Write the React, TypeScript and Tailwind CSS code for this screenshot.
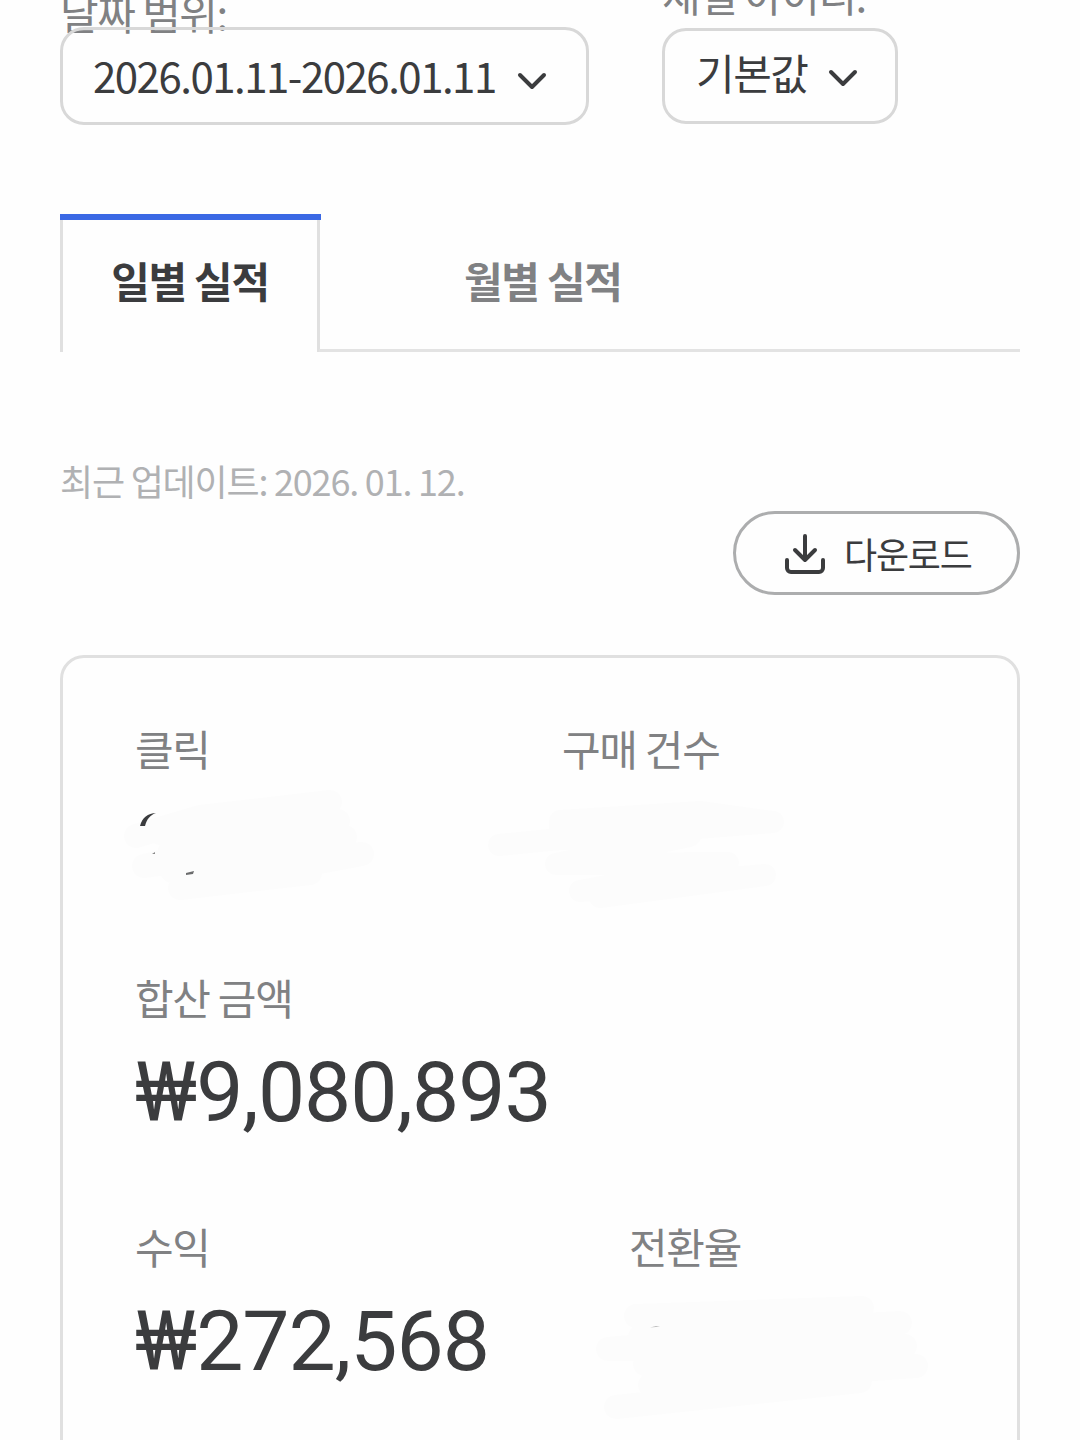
import type { ReactNode } from "react";

const tabs = [
  { id: "daily", label: "일별 실적" },
  { id: "monthly", label: "월별 실적" },
];

function Chevron() {
  return (
    <svg className="h-[18px] w-[30px] shrink-0" viewBox="0 0 30 18" fill="none" aria-hidden>
      <path d="M3 3 15 15 27 3" stroke="#3b3c3e" strokeWidth="4" strokeLinecap="round" strokeLinejoin="round" />
    </svg>
  );
}

function DownloadIcon() {
  return (
    <svg className="h-[42px] w-[42px] shrink-0" viewBox="0 0 42 42" fill="none" aria-hidden>
      <g stroke="#3b3c3e" strokeWidth="4" strokeLinecap="round" strokeLinejoin="round">
        <path d="M21 4v24M11 18 21 28l10-10" />
        <path d="M3 28v8a4 4 0 0 0 4 4h28a4 4 0 0 0 4-4v-8" />
      </g>
    </svg>
  );
}

/** One label/value pair inside the summary card. */
function Metric({ label, children }: { label: string; children?: ReactNode }) {
  return (
    <div className="relative">
      <div className="h-14 text-[42px] leading-[56px] tracking-[-1.3px] text-[#808183]">{label}</div>
      <div className="mt-5 h-24 font-['Roboto','Noto_Sans_CJK_KR',sans-serif] text-[84px] leading-[96px] tracking-[-1px] text-[#3b3c3e]">
        {children}
      </div>
    </div>
  );
}

/* Hand-drawn masks over the hidden values, a few specks of the digits still show */
function ClickMask() {
  return (
    <svg className="absolute -left-[15px] top-[61px] h-[130px] w-[270px]" viewBox="120 780 270 130" fill="none" aria-hidden>
      <g stroke="#fcfcfc" strokeWidth="24" strokeLinecap="round" strokeLinejoin="round">
        <path d="M136 835 200 816 330 801 160 832 338 820 144 865 345 836 172 870 362 853 180 887 310 872" />
        <path d="M170 850 340 845" />
      </g>
      <path d="M140 825c2-8 8-13 16-13-6 2-9 6-11 13z" fill="#3b3c3e" />
      <path d="m152 853 3-2v2z" fill="#888" />
      <path d="m186 872 8-2-1 3-7 1z" fill="#6b6c6d" />
    </svg>
  );
}

function PurchaseMask() {
  return (
    <svg className="absolute -left-[77px] top-[71px] h-[130px] w-[310px]" viewBox="485 790 310 130" fill="none" aria-hidden>
      <g stroke="#fcfcfc" strokeWidth="22" strokeLinecap="round" strokeLinejoin="round">
        <path d="M499 844 560 838 560 820 700 811 773 821 560 838 690 835 556 863 728 862 580 890 765 874 600 896" />
      </g>
    </svg>
  );
}

function ConversionMask() {
  return (
    <svg className="absolute -left-[39px] top-[67px] h-[140px] w-[350px]" viewBox="590 1285 350 140" fill="none" aria-hidden>
      <g stroke="#fcfcfc" strokeWidth="24" strokeLinecap="round" strokeLinejoin="round">
        <path d="M636 1316 862 1308 640 1337 900 1323 608 1349 905 1346 645 1364 916 1366 650 1385 860 1381 616 1407" />
      </g>
      <path d="m650 1327.5 6-1.5 4 .5-4 .5z" fill="#bbb" />
    </svg>
  );
}

export default function App() {
  return (
    <div className="h-[1440px] w-[1080px] overflow-hidden bg-[#fefefe] px-[60px] font-['Noto_Sans_CJK_KR',sans-serif] text-[#3b3c3e]">
      {/* Filters */}
      <div className="flex h-[214px] items-start">
        <div className="-mt-[9px] w-[529px]">
          <div className="h-[42px] text-[42px] leading-[42px] tracking-[-1.5px] text-[#808183]">날짜 범위:</div>
          <button className="relative -mt-[6px] flex h-[98px] w-full items-center rounded-[24px] border-[3px] border-[#d8d8d8] pl-[30px] text-[42px] leading-[60px] tracking-[-1.5px]">
            <span className="-mt-[2px]">2026.01.11-2026.01.11</span>
            <span className="ml-[21px] mt-[10px] flex">
              <Chevron />
            </span>
          </button>
        </div>
        <div className="-mt-[27px] ml-[73px] w-[236px]">
          <div className="h-[42px] whitespace-nowrap text-[42px] leading-[42px] tracking-[-1.5px] text-[#808183]">채널 아이디:</div>
          <button className="mt-[13px] flex h-24 w-full items-center rounded-[24px] border-[3px] border-[#d8d8d8] pl-[31px] text-[42px] leading-[60px] tracking-[-1.5px]">
            <span className="-mt-[8px]">기본값</span>
            <span className="ml-[21px] mt-1 flex">
              <Chevron />
            </span>
          </button>
        </div>
      </div>

      {/* Tabs */}
      <div className="flex h-[138px] text-[42px] font-bold leading-[60px] tracking-[-1.3px]">
        <button className="flex w-[261px] flex-col border-t-[6px] border-[#3a68e4]">
          <span className="flex h-[132px] w-[260px] justify-center border-x-[3px] border-[#e0e0e0] pt-[30px]">{tabs[0].label}</span>
        </button>
        <button className="-ml-[2px] flex flex-1 border-b-[3px] border-[#e3e3e3] pl-[145px] pt-[36px] text-[#808183]">{tabs[1].label}</button>
      </div>

      <p className="mt-[103px] h-[50px] text-[36px] leading-[50px] tracking-[-1.2px] text-[#b0b1b3]">최근 업데이트: 2026. 01. 12.</p>

      <div className="mt-[6px] flex justify-end">
        <button className="flex h-[84px] w-[287px] items-center rounded-full border-[3px] border-[#acadae] pl-[48px] text-[36px] leading-[50px] tracking-[-1.2px]">
          <DownloadIcon />
          <span className="ml-[18px]">다운로드</span>
        </button>
      </div>

      {/* Summary */}
      <section className="mt-[60px] flex h-[900px] flex-col gap-[77px] rounded-[24px] border-[3px] border-[#e0e0e0] pl-[72px] pt-[62px]">
        <div className="grid grid-cols-[427px_1fr]">
          <Metric label="클릭">
            <ClickMask />
          </Metric>
          <Metric label="구매 건수">
            <PurchaseMask />
          </Metric>
        </div>
        <Metric label="합산 금액">₩9,080,893</Metric>
        <div className="grid grid-cols-[494px_1fr]">
          <Metric label="수익">₩272,568</Metric>
          <Metric label="전환율">
            <ConversionMask />
          </Metric>
        </div>
      </section>
    </div>
  );
}
